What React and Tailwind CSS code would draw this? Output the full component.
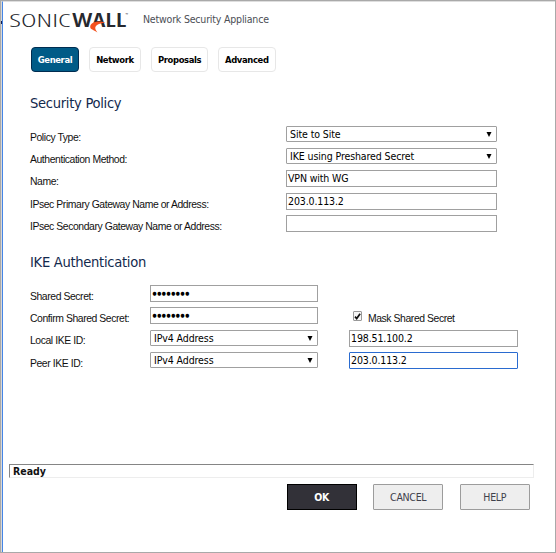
const tahoma = "font-['DejaVu_Sans_Condensed','DejaVu_Sans',sans-serif] [font-stretch:condensed]";
const arial = "font-['Liberation_Sans',Arial,sans-serif]";

function Logo() {
  return (
    <svg width="121" height="26" viewBox="0 0 121 26" className="block shrink-0" aria-label="SonicWall">
      <g fontFamily="Open Sans, sans-serif" fill="#26282e">
        <text x="-0.7" y="18.8" fontSize="19" fontWeight="300" textLength="61.4" lengthAdjust="spacingAndGlyphs">SONIC</text>
        <text x="62.2" y="18.8" fontSize="19" fontWeight="600" textLength="54" lengthAdjust="spacingAndGlyphs">WALL</text>
        <text x="115.5" y="8" fontSize="4" textLength="4">™</text>
      </g>
      <path d="M79 19.5L82 14.5L89 16L87.5 19.5Z" fill="#fff" />
      <path d="M95.3 14.6C88 12 80 14.2 80.2 18.9C80.4 21.6 84.5 22 87.4 24.4C83.4 19.6 84.6 16.2 95.3 14.6Z" fill="#f4511e" />
    </svg>
  );
}

function Tab({ children, className }) {
  return (
    <button className={`flex h-[25px] items-center justify-center rounded-[4px] border pt-[2px] ${className}`}>
      <span className="whitespace-nowrap">{children}</span>
    </button>
  );
}

function Label({ children }) {
  return <span className={`${arial} pt-[4.6px] text-[10.4px] leading-[13px] tracking-[-0.42px] whitespace-nowrap text-[#111]`}>{children}</span>;
}

function Select({ children, className }) {
  return (
    <div className={`flex h-4 items-center justify-between rounded-[1px] border border-[#a0a0a0] bg-white pr-[4px] pl-[3px] text-[10.5px] leading-[14px] tracking-[-0.1px] text-black ${className}`}>
      <span>{children}</span>
      <svg width="6" height="5" viewBox="0 0 6 5"><path d="M0.5 0H5.5L3 5Z" fill="#000" /></svg>
    </div>
  );
}

function Field({ children, className }) {
  return (
    <div className={`flex h-[17px] items-center border pl-[1px] text-[10.5px] leading-[15px] tracking-[-0.13px] text-black ${className}`}>
      {children}
    </div>
  );
}

function Secret() {
  return (
    <Field className="w-[168px] border-[#a0a0a0]">
      <span className="pb-[1px] pl-[0.5px] text-[5.2px] leading-[14px] tracking-[0.6px]">●●●●●●●●</span>
    </Field>
  );
}

function Row({ label, className = "", children }) {
  return (
    <div className={`flex items-start ${className}`}>
      <div className="flex shrink-0 grow">
        <Label>{label}</Label>
      </div>
      {children}
    </div>
  );
}

function Heading({ children }) {
  return <h2 className="h-5 text-[14.6px] leading-5 tracking-[-0.3px] whitespace-nowrap text-[#12294d]">{children}</h2>;
}

export default function App() {
  return (
    <div className={`flex h-[553px] w-[556px] border border-[#a9a9a9] bg-white ${tahoma}`}>
      <div className="w-px shrink-0 bg-[#d8d8d8]">
        <div className="mt-[20px] h-[3px] w-px bg-[#101d50]" />
      </div>
      <div className="flex grow flex-col border-t border-l border-t-[#dedede] border-l-[#4585e6]">
        <header className="flex h-[26px] items-start pt-[6px] pl-[7px]">
          <Logo />
          <span className="ml-[12px] pt-[4px] text-[10.5px] leading-[14px] tracking-[-0.19px] whitespace-nowrap text-[#4b4e55]">Network Security Appliance</span>
        </header>

        <nav className="mt-[19px] ml-[28px] flex gap-[9.7px] text-[9.4px] font-bold tracking-[-0.38px]">
          <Tab className="w-[48px] border-[#002c50] bg-[#005b87] text-white">General</Tab>
          <Tab className="w-[52.5px] border-[#e7e7e7] bg-white text-black">Network</Tab>
          <Tab className="w-[57.5px] border-[#e7e7e7] bg-white text-black">Proposals</Tab>
          <Tab className="w-[57.5px] border-[#e7e7e7] bg-white text-black">Advanced</Tab>
        </nav>

        <section className="mt-[21px] ml-[27px] w-[467px]">
          <Heading>Security Policy</Heading>
          <div className="mt-[13px]">
            <Row label="Policy Type:" className="h-[22px]"><Select className="w-[211px]">Site to Site</Select></Row>
            <Row label="Authentication Method:" className="h-[22px]"><Select className="w-[211px]">IKE using Preshared Secret</Select></Row>
            <Row label="Name:" className="h-[23px]"><Field className="w-[211px] border-[#a0a0a0]">VPN with WG</Field></Row>
            <Row label="IPsec Primary Gateway Name or Address:" className="h-[22px]"><Field className="w-[211px] border-[#a0a0a0]">203.0.113.2</Field></Row>
            <Row label="IPsec Secondary Gateway Name or Address:" className="h-[22px]"><Field className="w-[211px] border-[#a0a0a0]" /></Row>
          </div>
        </section>

        <section className="mt-[15px] ml-[27px] w-[488px]">
          <Heading>IKE Authentication</Heading>
          <div className="mt-[13px]">
            <Row label="Shared Secret:" className="h-[22px]">
              <Secret />
              <div className="w-[200px]" />
            </Row>
            <Row label="Confirm Shared Secret:" className="h-[22px]">
              <Secret />
              <div className="flex w-[200px] items-start pl-[35px]">
                <div className="mt-[4px] flex h-[10px] w-[9px] items-center justify-center rounded-[1px] border border-[#999] bg-[#f6f6f6]">
                  <svg width="7" height="7" viewBox="0 0 7 7" fill="none"><path d="M1 3.6L2.7 5.6L6.1 0.8" stroke="#111" strokeWidth="1.7" /></svg>
                </div>
                <span className="ml-[6px] flex"><Label>Mask Shared Secret</Label></span>
              </div>
            </Row>
            <Row label="Local IKE ID:" className="h-[23px]">
              <Select className="mt-[1px] w-[168px]">IPv4 Address</Select>
              <Field className="mt-[1px] ml-[31px] w-[169px] border-[#a0a0a0]">198.51.100.2</Field>
            </Row>
            <Row label="Peer IKE ID:" className="h-[22px]">
              <Select className="w-[168px]">IPv4 Address</Select>
              <Field className="ml-[31px] w-[169px] rounded-[1px] border-[#2a6bd0]">203.0.113.2</Field>
            </Row>
          </div>
        </section>

        <div className="mt-[90px] ml-[6px] flex h-[14px] w-[525px] items-center border border-t-[#858585] border-r-[#ededed] border-b-[#ededed] border-l-[#858585] pl-[3px] text-[10.5px] leading-[12px] font-bold text-[#111]">
          Ready
        </div>

        <footer className="mt-[6px] flex gap-[16.6px] pl-[283.6px] text-[10.5px] tracking-[-0.3px]">
          <button className="h-[26px] w-[70px] border border-black bg-[#323138] pt-[1px] font-bold text-white">OK</button>
          <button className="h-[26px] w-[70px] rounded-[1px] border border-[#9c9c9c] bg-[#eeeeee] pt-[1px] text-[#40414c]">CANCEL</button>
          <button className="h-[26px] w-[70px] rounded-[1px] border border-[#9c9c9c] bg-[#eeeeee] pt-[1px] text-[#40414c]">HELP</button>
        </footer>
      </div>
    </div>
  );
}
